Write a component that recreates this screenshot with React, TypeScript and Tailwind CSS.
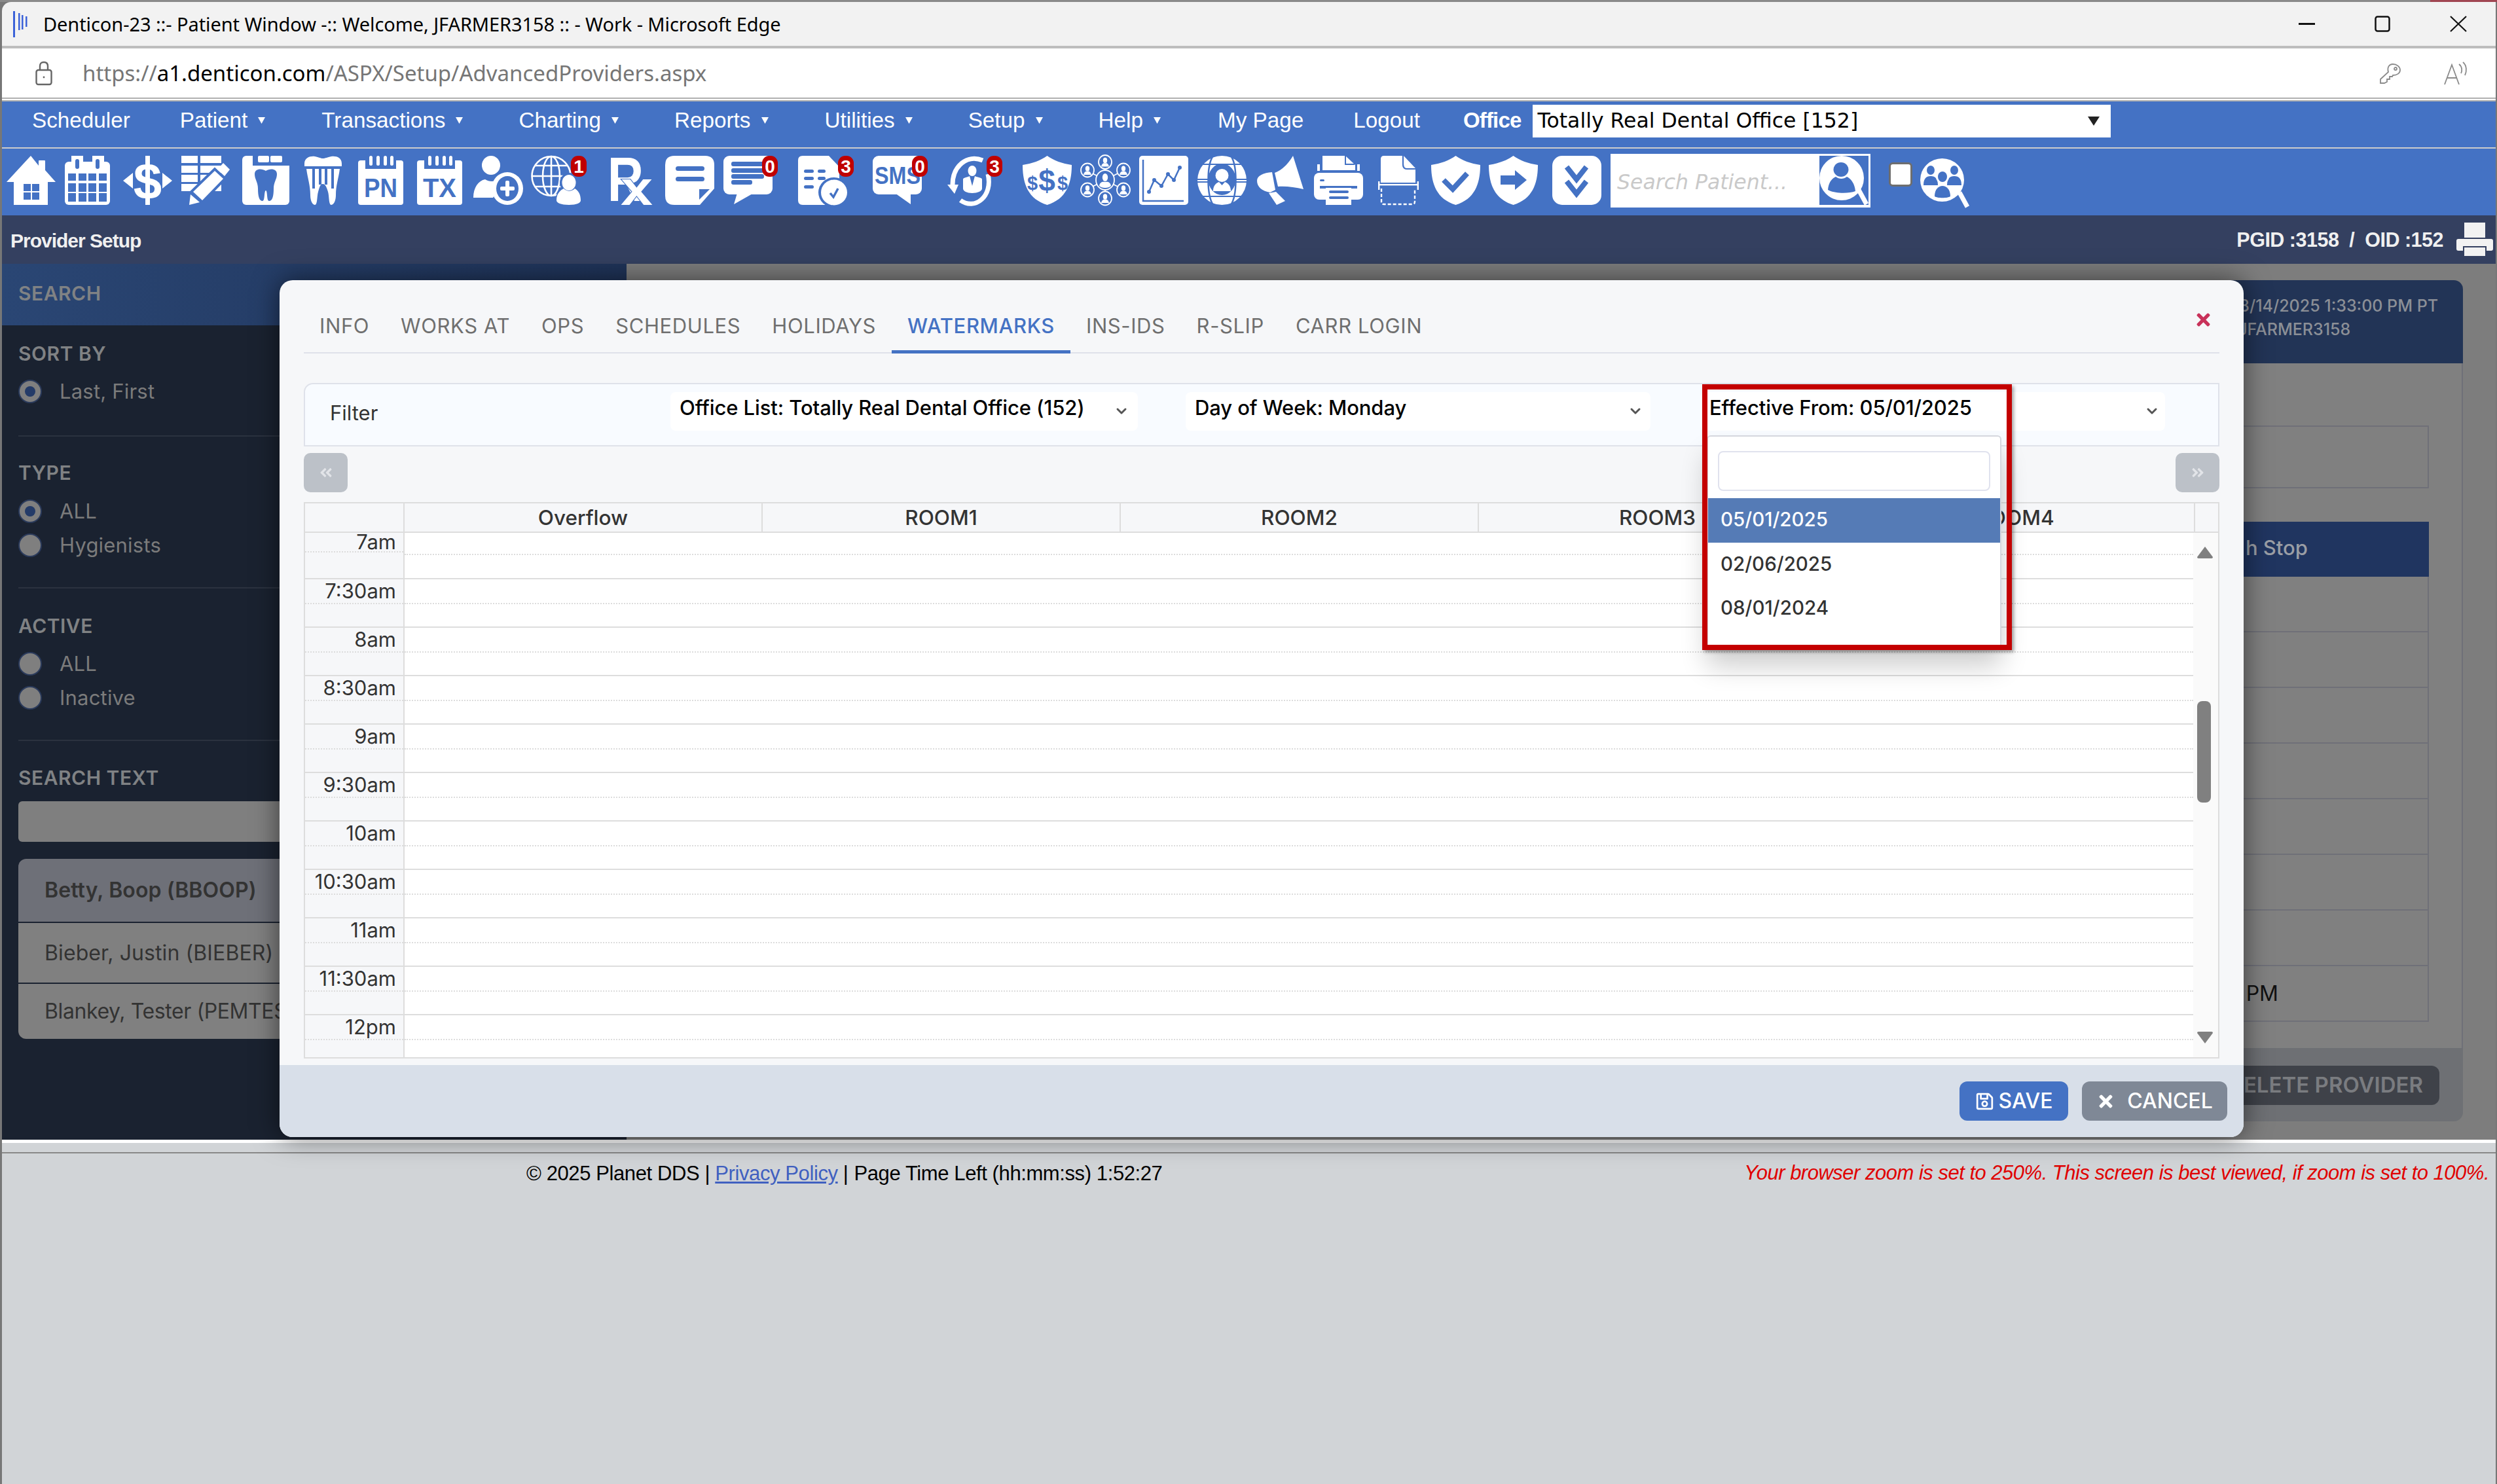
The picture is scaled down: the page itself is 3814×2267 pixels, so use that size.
import type { ReactNode } from "react"
import { FaTimes, FaRegSave, FaAngleDoubleLeft, FaAngleDoubleRight } from "react-icons/fa"
import { ChevronDown } from "lucide-react"

const W = "#ffffff"
const B = "#4472c4"

function Icon({ w, className, children }: { w: number; className?: string; children: ReactNode }) {
  return (
    <svg
      width={w}
      height={75}
      viewBox={`0 0 ${w} 75`}
      className={`shrink-0 overflow-visible font-['Liberation_Sans',sans-serif] font-bold ${className ?? ""}`}
    >
      {children}
    </svg>
  )
}

function Badge({ x, n }: { x: number; n: string }) {
  return (
    <g>
      <rect x={x} y={0} width={24} height={32} rx={11} fill="#c00000" />
      <text x={x + 12} y={25.5} textAnchor="middle" fontSize={28} fill={W}>
        {n}
      </text>
    </g>
  )
}

const SHIELD = "M37.5 0C28 7 14 12 0 14C0 42 8 66 37.5 75C67 66 75 42 75 14C61 12 47 7 37.5 0Z"

function Mini({ x, y }: { x: number; y: number }) {
  return (
    <g>
      <ellipse cx={x} cy={y} rx={10} ry={10.5} fill={B} stroke={W} strokeWidth={1.8} />
      <ellipse cx={x} cy={y - 2.5} rx={3.2} ry={4.2} fill={W} />
      <path d={`M${x - 6} ${y + 7}C${x - 5} ${y + 2} ${x - 2} ${y + 1} ${x} ${y + 2}C${x + 2} ${y + 1} ${x + 5} ${y + 2} ${x + 6} ${y + 7}Z`} fill={W} />
    </g>
  )
}

function DocTop({ label }: { label: string }) {
  return (
    <>
      <rect x={0} y={7} width={69} height={68} rx={4} fill={W} />
      <rect x={11} y={-1} width={47} height={21} fill={B} />
      {[17, 28, 39, 49].map((x) => (
        <rect key={x} x={x} y={0} width={5} height={15} rx={2.5} fill={W} />
      ))}
      <text x={9} y={63} fontSize={40} textLength={51} lengthAdjust="spacingAndGlyphs" fill={B}>
        {label}
      </text>
    </>
  )
}

function Toolbar() {
  return (
    <div className="flex h-[102px] items-start bg-[#4472c4] pt-[11px]">
      {/* house */}
      <Icon w={75} className="ml-[7px]">
        <path d="M37 0L49 15V8Q49 7 50 7H58Q59 7 59 8V22L75 40H63V75H11V40H0Z" fill={W} />
        {[26, 39].map((x) => [43, 56].map((y) => <rect key={`${x}${y}`} x={x} y={y} width={11} height={11} fill={B} />))}
      </Icon>
      {/* calendar */}
      <Icon w={69} className="ml-[14px]">
        <rect x={0} y={9} width={69} height={66} rx={6} fill={W} />
        <rect x={10} y={0} width={18} height={12} fill={W} />
        <rect x={42} y={0} width={18} height={12} fill={W} />
        <rect x={16} y={5} width={6} height={15} rx={3} fill={B} />
        <rect x={47} y={5} width={6} height={15} rx={3} fill={B} />
        {[5, 21, 36, 52].map((x) =>
          [27, 42, 57].map((y) => <rect key={`${x}${y}`} x={x} y={y} width={12} height={y === 27 ? 11 : 13} fill={B} />),
        )}
      </Icon>
      {/* dollar */}
      <Icon w={75} className="ml-[20px]">
        <rect x={34} y={0} width={7} height={75} fill={W} />
        <text x={37.5} y={66} textAnchor="middle" fontSize={78} fill={W}>
          $
        </text>
        <path d="M0 38L15 26V50ZM75 38L60 26V50Z" fill={W} />
      </Icon>
      {/* grid + pencil */}
      <Icon w={75} className="ml-[14px]">
        {[
          [0, 11],
          [15, 11],
          [29, 11],
          [43, 11],
        ].map(([y, h]) => (
          <g key={y}>
            <rect x={0} y={y} width={25} height={h} fill={W} />
            <rect x={29} y={y} width={32} height={h} fill={W} />
          </g>
        ))}
        <path d="M18 55L51 23L64 35L32 68Z" fill={B} stroke={B} strokeWidth={8} />
        <path d="M18 55L51 23L64 35L32 68Z" fill={W} />
        <path d="M14 59L28 71L12 75Z" fill={W} />
        <path d="M55 21L64 11L74 21L66 31Z" fill={W} />
      </Icon>
      {/* x-ray card */}
      <Icon w={72} className="ml-[18px]">
        <rect x={0} y={0} width={72} height={75} rx={6} fill={W} />
        <rect x={16} y={-1} width={57} height={16} fill={B} />
        <rect x={24} y={0} width={17} height={10} rx={2} fill={W} />
        <rect x={43} y={0} width={18} height={10} rx={2} fill={W} />
        <path d="M19 28C19 19 30 19 36 23C42 19 53 19 53 28C53 36 48 40 48 50C48 62 46 69 41 69C37 69 39 54 36 53C33 54 35 69 31 69C26 69 24 62 24 50C24 40 19 36 19 28Z" fill={B} />
      </Icon>
      {/* tooth */}
      <Icon w={57} className="ml-[23px]">
        <path d="M0 12C0 2 10 0 16 1C22 2 25 4 28 4C32 4 35 2 41 1C48 0 57 2 57 12V16H0Z" fill={W} />
        <path d="M3 20H54C52 35 48 45 48 60C48 70 44 75 41 75C37 75 38 62 36 55C34 48 32 43 28 43C24 43 23 48 21 55C19 62 20 75 16 75C13 75 9 70 9 60C9 45 5 35 3 20Z" fill={W} />
        {[12, 22, 31, 41].map((x) => (
          <rect key={x} x={x} y={20} width={4} height={x === 12 || x === 41 ? 30 : 24} fill={B} />
        ))}
      </Icon>
      <Icon w={69} className="ml-[25px]">
        <DocTop label="PN" />
      </Icon>
      <Icon w={68} className="ml-[21px]">
        <DocTop label="TX" />
      </Icon>
      {/* person plus */}
      <Icon w={76} className="ml-[18px]">
        <ellipse cx={27} cy={14.5} rx={14} ry={14.5} fill={W} />
        <path d="M0 64C0 48 8 38 18 36C24 40 32 40 38 36L46 40L30 64Z" fill={W} />
        <ellipse cx={52} cy={50} rx={24} ry={25} fill={W} />
        <ellipse cx={52} cy={50} rx={17} ry={19} fill={B} />
        <rect x={49} y={38} width={6} height={24} rx={2} fill={W} />
        <rect x={41} y={47} width={22} height={6} rx={2} fill={W} />
      </Icon>
      {/* globe with person */}
      <Icon w={86} className="ml-[12px]">
        <g fill="none" stroke={W} strokeWidth={2.6}>
          <ellipse cx={31} cy={31} rx={29.5} ry={30} />
          <ellipse cx={31} cy={31} rx={13} ry={30} />
          <path d="M31 1V61M2 31H60M7 15H55M7 47H55" />
        </g>
        <ellipse cx={58} cy={41} rx={14} ry={15} fill={B} />
        <path d="M37 78C34 60 44 48 58 48C72 48 80 60 77 78Z" fill={B} />
        <ellipse cx={58} cy={41} rx={10.5} ry={12} fill={W} />
        <path d="M39 68C39 57 46 52 50 50C55 55 62 55 67 50C72 53 76 58 76 68C76 72 70 75 58 75C46 75 39 72 39 68Z" fill={W} />
        <Badge x={61} n="1" />
      </Icon>
      {/* Rx */}
      <Icon w={69} className="ml-[31px]">
        <text x={0} y={69} fontSize={96} textLength={55} lengthAdjust="spacingAndGlyphs" fill={W}>
          R
        </text>
        <text x={20} y={75} fontSize={74} textLength={49} lengthAdjust="spacingAndGlyphs" fill={W} stroke={B} strokeWidth={2} paintOrder="stroke">
          x
        </text>
      </Icon>
      {/* note */}
      <Icon w={75} className="ml-[19px]">
        <path d="M14 0H61Q75 0 75 14V50L53 75H14Q0 75 0 61V14Q0 0 14 0Z" fill={W} />
        <path d="M52 51H68L52 67Z" fill={B} />
        <rect x={16} y={16} width={44} height={7} rx={3.5} fill={B} />
        <rect x={16} y={32} width={44} height={7} rx={3.5} fill={B} />
      </Icon>
      {/* chat */}
      <Icon w={83} className="ml-[14px]">
        <rect x={0} y={0} width={75} height={59} rx={9} fill={W} />
        <path d="M21 57L16 74L46 57Z" fill={W} />
        <rect x={12} y={9} width={50} height={7} rx={3} fill={B} />
        <rect x={12} y={19} width={50} height={7} rx={3} fill={B} />
        <rect x={12} y={28} width={50} height={7} rx={3} fill={B} />
        <rect x={12} y={37} width={32} height={7} rx={3} fill={B} />
        <Badge x={59} n="0" />
      </Icon>
      {/* document check */}
      <Icon w={85} className="ml-[31px]">
        <path d="M7 0H47L63 17V68Q63 75 56 75H7Q0 75 0 68V7Q0 0 7 0Z" fill={W} />
        {[21, 32].map((y) => (
          <g key={y}>
            <rect x={9} y={y} width={15} height={5} rx={2.5} fill={B} />
            <rect x={30} y={y} width={12} height={5} rx={2.5} fill={B} />
          </g>
        ))}
        <rect x={9} y={45} width={15} height={5} rx={2.5} fill={B} />
        <ellipse cx={55} cy={56} rx={24} ry={23} fill={B} />
        <ellipse cx={55} cy={56} rx={20} ry={19.5} fill={W} />
        <path d="M49 57L54 63L61 50" fill="none" stroke={B} strokeWidth={3.5} />
        <Badge x={61} n="3" />
      </Icon>
      {/* sms */}
      <Icon w={84} className="ml-[29px]">
        <rect x={0} y={0} width={75} height={59} rx={9} fill={W} />
        <path d="M34 57L58 74V57Z" fill={W} />
        <text x={3} y={43} fontSize={36} textLength={70} lengthAdjust="spacingAndGlyphs" fill={B}>
          SMS
        </text>
        <Badge x={60} n="0" />
      </Icon>
      {/* sync person */}
      <Icon w={85} className="ml-[30px]">
        <g fill="none" stroke={W} strokeWidth={7}>
          <path d="M54 7C30 -3 8 16 8 44" />
          <path d="M20 68C42 84 70 62 62 28" />
        </g>
        <path d="M0 44H17L11 58Z" fill={W} />
        <ellipse cx={38} cy={23} rx={6.5} ry={8} fill={W} />
        <path d="M24 36C24 33 30 33 34 31L38 46L42 31C46 33 53 33 53 36V50C53 54 46 57 38 57C30 57 24 54 24 50Z" fill={W} />
        <Badge x={60} n="3" />
      </Icon>
      {/* shield money */}
      <Icon w={75} className="ml-[30px]">
        <path d={SHIELD} fill={W} />
        <text x={15} y={52} textAnchor="middle" fontSize={29} fill={B}>
          $
        </text>
        <text x={37} y={54} textAnchor="middle" fontSize={46} fill={B}>
          $
        </text>
        <text x={61} y={52} textAnchor="middle" fontSize={29} fill={B}>
          $
        </text>
      </Icon>
      {/* network */}
      <Icon w={75} className="ml-[14px]">
        <path d="M37 19V56M14 25L60 49M60 25L14 49" stroke={W} strokeWidth={1.8} />
        <ellipse cx={37} cy={37} rx={14} ry={15} fill={B} stroke={W} strokeWidth={1.8} />
        <ellipse cx={37} cy={33} rx={4.2} ry={6} fill={W} />
        <path d="M28 46C29 40 33 39 37 40C41 39 45 40 46 46C42 50 32 50 28 46Z" fill={W} />
        <Mini x={37} y={9.5} />
        <Mini x={10} y={22} />
        <Mini x={65} y={22} />
        <Mini x={10} y={52} />
        <Mini x={65} y={52} />
        <Mini x={37} y={65} />
      </Icon>
      {/* chart */}
      <Icon w={75} className="ml-[14px]">
        <rect x={0} y={0} width={75} height={75} rx={5} fill={W} />
        <path d="M6 6V69H68" fill="none" stroke={B} strokeWidth={2.5} />
        <path d="M15 55L23 37L34 46L44 28L53 37L62 18" fill="none" stroke={B} strokeWidth={2.5} />
        {[
          [15, 55],
          [23, 37],
          [34, 46],
          [44, 28],
          [53, 37],
          [62, 18],
        ].map(([x, y]) => (
          <circle key={x} cx={x} cy={y} r={3} fill={B} />
        ))}
      </Icon>
      {/* globe person */}
      <Icon w={75} className="ml-[14px]">
        <ellipse cx={37.5} cy={37.5} rx={37.5} ry={37.5} fill={W} />
        <path d="M0 13H75M0 36H18M57 36H75M0 40H18M57 40H75M0 62H75" stroke={B} strokeWidth={2} />
        <path d="M24 0C14 14 14 60 24 75M51 0C61 14 61 60 51 75" fill="none" stroke={B} strokeWidth={2.5} />
        <ellipse cx={37.5} cy={36} rx={21} ry={24} fill={B} />
        <ellipse cx={37.5} cy={30} rx={10} ry={10} fill={W} />
        <path d="M24 54C24 44 30 41 33 40L37.5 45L42 40C45 41 51 44 51 54Z" fill={W} />
      </Icon>
      {/* megaphone */}
      <Icon w={71} className="ml-[16px]">
        <path d="M55 0L71 51C58 48 44 46 32 47L27 26C38 22 48 12 55 0Z" fill={W} />
        <path d="M23 25L28 52L20 56C8 54 0 48 0 38C0 30 10 26 23 25Z" fill={W} />
        <path d="M18 57L29 55L43 69L30 75Z" fill={W} />
      </Icon>
      {/* printer */}
      <Icon w={75} className="ml-[16px]">
        <path d="M13 0H48L63 14V22H13Z" fill={W} />
        <path d="M48 0V13H62" fill="none" stroke={B} strokeWidth={2} />
        <rect x={5} y={13} width={4} height={10} fill={W} />
        <rect x={66} y={13} width={4} height={10} fill={W} />
        <rect x={0} y={26} width={75} height={41} rx={8} fill={W} />
        <rect x={9} y={46} width={57} height={4} fill={B} />
        <rect x={9} y={36} width={7} height={3} rx={1.5} fill={B} />
        <rect x={18} y={49} width={39} height={26} fill={W} />
        <rect x={23} y={53} width={30} height={4} rx={2} fill={B} />
        <rect x={23} y={62} width={30} height={4} rx={2} fill={B} />
      </Icon>
      {/* scan document */}
      <Icon w={62} className="ml-[23px]">
        <path d="M9 0H39L57 19V41H4V5Q4 0 9 0Z" fill={W} />
        <path d="M38 0V13Q38 20 44 20H57" fill="none" stroke={B} strokeWidth={2.2} />
        <rect x={0} y={43} width={62} height={2.4} fill={W} />
        <rect x={0} y={39} width={2.4} height={13} fill={W} />
        <rect x={59.6} y={39} width={2.4} height={13} fill={W} />
        <path d="M5 50V70Q5 74 9 74H52Q56 74 56 70V50" fill="none" stroke={W} strokeWidth={2.4} strokeDasharray="5 3" />
      </Icon>
      {/* shield check */}
      <Icon w={75} className="ml-[19px]">
        <path d={SHIELD} fill={W} />
        <path d="M19 37L33 51L55 27" fill="none" stroke={B} strokeWidth={8} />
      </Icon>
      {/* shield arrow */}
      <Icon w={77} className="ml-[13px]">
        <path d={SHIELD} fill={W} />
        <path d="M18 30H40V22L58 37L40 52V44H18Z" fill={B} />
      </Icon>
      {/* double chevrons */}
      <Icon w={75} className="ml-[20px]">
        <rect x={0} y={0} width={75} height={75} rx={15} fill={W} />
        <path d="M22 17L37 36L52 17M22 39L37 58L52 39" fill="none" stroke={B} strokeWidth={8} />
      </Icon>
      {/* patient search */}
      <div className="ml-[14px] -mt-[3px] flex h-[82px] w-[397px] items-start bg-white">
        <span className="mt-[25px] ml-[10px] flex-1 font-['DejaVu_Sans',sans-serif] text-[31.5px] leading-[36px] italic text-[#c9c9c9]">
          Search Patient...
        </span>
        <Icon w={75} className="mt-[3px] mr-[3px]">
          <rect x={0} y={0} width={75} height={75} fill={B} />
          <ellipse cx={34} cy={34} rx={34} ry={34} fill={W} />
          <path d="M60 52L72 74" stroke={W} strokeWidth={7} />
          <ellipse cx={33} cy={21} rx={11.5} ry={11} fill={B} />
          <path d="M13 52C14 40 20 34 25 32C30 36 37 36 42 32C48 35 54 42 55 54C45 58 23 58 13 52Z" fill={B} />
        </Icon>
      </div>
      <input type="checkbox" className="mt-[10px] ml-[28px] h-[37px] w-[36px] appearance-none rounded-[6px] border-[3px] border-[#6e6e6e] bg-white" />
      {/* group search */}
      <Icon w={77} className="mt-[4px] ml-[12px]">
        <ellipse cx={33.5} cy={33} rx={33.5} ry={33} fill={W} />
        <path d="M60 52L72 74" stroke={W} strokeWidth={7} />
        {[
          [16, 24],
          [52, 24],
        ].map(([x, y]) => (
          <g key={x}>
            <ellipse cx={x} cy={y - 6} rx={6} ry={7} fill={B} />
            <path d={`M${x - 11} ${y + 17}C${x - 11} ${y + 7} ${x - 7} ${y + 3} ${x} ${y + 3}C${x + 7} ${y + 3} ${x + 11} ${y + 7} ${x + 11} ${y + 17}Z`} fill={B} />
          </g>
        ))}
        <ellipse cx={34} cy={28} rx={10} ry={11} fill={W} />
        <ellipse cx={34} cy={28} rx={7} ry={8} fill={B} />
        <path d="M19 60C19 46 26 40 34 40C42 40 49 46 49 60C44 64 24 64 19 60Z" fill={W} />
        <path d="M22 58C22 47 28 42 34 42C40 42 46 47 46 58C42 61 26 61 22 58Z" fill={B} />
      </Icon>
    </div>
  )
}

function Caret() {
  return (
    <svg width={13} height={12} viewBox="0 0 13 12" className="ml-[15px]">
      <path d="M1 1H12L6.5 11Z" fill={W} />
    </svg>
  )
}

function NavBar() {
  return (
    <div className="flex h-[70px] items-center bg-[#4472c4] pb-[12px] pl-[46px] font-['Liberation_Sans',sans-serif] text-[33.25px] text-white">
      <span>Scheduler</span>
      <span className="ml-[76px] flex items-center">
        Patient
        <Caret />
      </span>
      <span className="ml-[85px] flex items-center">
        Transactions
        <Caret />
      </span>
      <span className="ml-[84px] flex items-center">
        Charting
        <Caret />
      </span>
      <span className="ml-[84px] flex items-center">
        Reports
        <Caret />
      </span>
      <span className="ml-[85px] flex items-center">
        Utilities
        <Caret />
      </span>
      <span className="ml-[84px] flex items-center">
        Setup
        <Caret />
      </span>
      <span className="ml-[84px] flex items-center">
        Help
        <Caret />
      </span>
      <span className="ml-[86px]">My Page</span>
      <span className="ml-[76px]">Logout</span>
      <span className="ml-[66px] text-[33px] font-bold tracking-[-0.8px]">Office</span>
      <div className="-mb-[2px] ml-[17px] flex h-[50px] w-[883px] items-center justify-between bg-white pr-[16px] pl-[8px] font-['DejaVu_Sans',sans-serif] text-[31.5px] text-black">
        <span>Totally Real Dental Office [152]</span>
        <svg width={20} height={16} viewBox="0 0 20 16">
          <path d="M1 1H19L10 15Z" fill="#222222" />
        </svg>
      </div>
    </div>
  )
}

function Radio({ label, checked }: { label: string; checked?: boolean }) {
  return (
    <div className="flex h-[52px] items-center gap-[27px] text-[31px] tracking-[0.2px] text-[#7b7b7b]">
      <span className="flex h-[36px] w-[36px] items-center justify-center rounded-full border-2 border-[#2b3b5c] bg-[#7f7f7f]">
        {checked && <span className="h-[16px] w-[16px] rounded-full bg-[#243b68]" />}
      </span>
      {label}
    </div>
  )
}

function LeftPanel() {
  const title = "h-[36px] text-[30px] leading-[36px] font-semibold tracking-[0.5px] text-[#808284]"
  return (
    <div className="flex w-[954px] shrink-0 flex-col bg-[#1a2230] font-['Inter',sans-serif]">
      <div className={`flex h-[94px] items-center bg-linear-to-r from-[#2a4674] to-[#1f3358] pb-[4px] pl-[25px] ${title}`}>SEARCH</div>
      <div className="mx-[25px]">
        <div className="border-b-2 border-[#2b323f] pt-[25px] pb-[41px]">
          <div className={title}>SORT BY</div>
          <div className="mt-[14px]">
            <Radio label="Last, First" checked />
          </div>
        </div>
        <div className="border-b-2 border-[#2b323f] pt-[37px] pb-[38px]">
          <div className={title}>TYPE</div>
          <div className="mt-[15px]">
            <Radio label="ALL" checked />
            <Radio label="Hygienists" />
          </div>
        </div>
        <div className="border-b-2 border-[#2b323f] pt-[39px] pb-[38px]">
          <div className={title}>ACTIVE</div>
          <div className="mt-[14px]">
            <Radio label="ALL" />
            <Radio label="Inactive" />
          </div>
        </div>
        <div className="pt-[38px]">
          <div className={title}>SEARCH TEXT</div>
          <div className="mt-[18px] h-[62px] rounded-[6px] bg-[#7f7f7f]" />
          <div className="mt-[26px] flex flex-col gap-[2px] overflow-hidden rounded-[12px] text-[32px] tracking-[0.1px] text-[#333333]">
            <div className="flex h-[96px] items-center bg-[#6e7078] pl-[40px] font-semibold">Betty, Boop (BBOOP)</div>
            <div className="flex h-[91px] items-center bg-[#808080] pl-[40px]">Bieber, Justin (BIEBER)</div>
            <div className="flex h-[84px] items-center bg-[#808080] pl-[40px] tracking-[-0.4px]">Blankey, Tester (PEMTEST)</div>
          </div>
        </div>
      </div>
    </div>
  )
}

function RightBehind() {
  const rows = [0, 1, 2, 3, 4, 5, 6, 7]
  return (
    <div className="flex flex-1 flex-col bg-[#7d7d7d] pt-[25px] pr-[50px] font-['Inter',sans-serif]">
      <div className="flex h-[127px] justify-end rounded-t-[14px] bg-[#223456] pt-[21px] pr-[38px] text-[25px] leading-[36px] font-medium text-[#8b8f96]">
        <div>
          <div>03/14/2025 1:33:00 PM PT</div>
          <div className="pl-[14px]">JFARMER3158</div>
        </div>
      </div>
      <div className="flex h-[1046px] flex-col border-r-2 border-[#6f7078] bg-[#808080] pt-[95px] pr-[50px]">
        <div className="h-[96px] border-y-2 border-r-2 border-[#6f7078]" />
        <div className="mt-[51px] flex h-[84px] items-center justify-end bg-[#203560] pr-[185px] pb-[4px] text-[31px] font-medium text-[#9a9ea5]">
          h Stop
        </div>
        {rows.map((r) => (
          <div
            key={r}
            className={
              r === 7
                ? "flex h-[85px] items-center justify-end border-r-2 border-b-2 border-[#6f7078] pr-[228px] text-[32px] text-[#111111]"
                : "flex h-[85px] items-center border-r-2 border-b-2 border-[#6f7078]"
            }
          >
            {r === 7 ? "PM" : ""}
          </div>
        ))}
      </div>
      <div className="flex h-[112px] items-start justify-end rounded-b-[14px] bg-[#6e7074] pt-[27px] pr-[36px]">
        <div className="flex h-[60px] w-[500px] items-center justify-end rounded-[12px] bg-[#3f4249] pr-[25px] text-[33px] font-semibold text-[#7a7c80]">
          DELETE PROVIDER
        </div>
      </div>
    </div>
  )
}

function Select({ label, className }: { label: string; className: string }) {
  return (
    <div className={`mt-[12px] flex h-[59px] items-start justify-between rounded-[8px] bg-white pt-[8px] pl-[14px] ${className}`}>
      <span className="text-[31px] leading-[32px] font-medium tracking-[-0.1px] text-black">{label}</span>
      <ChevronDown size={24} strokeWidth={3} className="mt-[9px] text-[#555555]" />
    </div>
  )
}

const TIMES = ["7am", "7:30am", "8am", "8:30am", "9am", "9:30am", "10am", "10:30am", "11am", "11:30am", "12pm"]

function Row({ time, i }: { time: string; i: number }) {
  const first = i === 0
  const last = i === TIMES.length - 1
  const half = first ? "h-[34px] border-b-2 border-dotted border-[#dcdcdc]" : "h-[38px] border-b-2 border-dotted border-[#dcdcdc]"
  return (
    <div className={`flex shrink-0 ${first ? "h-[71px]" : "h-[74px]"} ${last ? "" : "border-b-2 border-[#dddddd]"}`}>
      <div className="w-[152px] shrink-0 border-r-2 border-[#dddddd] bg-[#f6f7f9]">
        <div className={`${half} flex justify-end pr-[11px] text-[31px] leading-[36px] text-[#333333] ${first ? "-mt-[4px]" : "pt-[0px]"}`}>{time}</div>
      </div>
      <div className="flex-1 bg-white">
        <div className={half} />
      </div>
    </div>
  )
}

function Modal() {
  const tabs = ["INFO", "WORKS AT", "OPS", "SCHEDULES", "HOLIDAYS", "WATERMARKS", "INS-IDS", "R-SLIP", "CARR LOGIN"]
  const rooms = ["Overflow", "ROOM1", "ROOM2", "ROOM3", "ROOM4"]
  return (
    <div className="absolute top-[25px] left-[424px] z-10 flex h-[1309px] w-[3000px] flex-col rounded-[20px] bg-[#f6f7f9] font-['Inter',sans-serif] shadow-[0_0_40px_rgba(0,0,0,0.55)]">
      <div className="flex-1 px-[37px]">
        <div className="relative flex h-[112px] items-end border-b-2 border-[#dfe1ea]">
          {tabs.map((t) => (
            <div
              key={t}
              className={
                t === "WATERMARKS"
                  ? "-mb-[2px] flex h-[79px] items-center border-b-[5px] border-[#4472c4] px-[24px] text-[31px] font-medium tracking-[0.6px] text-[#4472c4]"
                  : "-mb-[2px] flex h-[79px] items-center border-b-[5px] border-transparent px-[24px] text-[31px] tracking-[0.6px] text-[#6f6f6f]"
              }
            >
              {t}
            </div>
          ))}
          <FaTimes size={29} className="absolute top-[46px] right-[10px] text-[#c8325a]" />
        </div>
        <div className="mt-[45px] flex h-[97px] items-start rounded-tl-[14px] border-[2.5px] border-[#dfe2ea] bg-[#f8fbff]">
          <span className="mt-[25px] ml-[38px] w-[520px] shrink-0 text-[31px] leading-[38px] text-[#333333]">Filter</span>
          <Select label="Office List: Totally Real Dental Office (152)" className="w-[714px] pr-[13px]" />
          <Select label="Day of Week: Monday" className="ml-[73px] w-[710px] pr-[11px]" />
          <Select label="Effective From: 05/01/2025" className="ml-[76px] w-[710px] pr-[8px]" />
        </div>
        <div className="mt-[10px] flex h-[60px] justify-between">
          <div className="flex w-[67px] items-center justify-center rounded-[10px] bg-[#bcc1c8] text-[#e2e4e8]">
            <FaAngleDoubleLeft size={22} />
          </div>
          <div className="flex w-[67px] items-center justify-center rounded-[10px] bg-[#bcc1c8] text-[#e2e4e8]">
            <FaAngleDoubleRight size={22} />
          </div>
        </div>
        <div className="mt-[15px] flex h-[850px] flex-col overflow-hidden border-x-2 border-y-2 border-[#dddddd]">
          <div className="flex h-[45px] shrink-0 border-b-2 border-[#dddddd] bg-[#f6f7f9] text-[31.5px] font-medium text-[#333333]">
            <div className="w-[152px] shrink-0 border-r-2 border-[#dddddd]" />
            {rooms.map((r) => (
              <div key={r} className="flex w-[547px] shrink-0 items-center justify-center border-r-2 border-[#dddddd]">
                {r}
              </div>
            ))}
          </div>
          <div className="flex min-h-0 flex-1">
            <div className="flex min-w-0 flex-1 flex-col overflow-hidden">
              {TIMES.map((t, i) => (
                <Row key={t} time={t} i={i} />
              ))}
            </div>
            <div className="flex w-[38px] shrink-0 flex-col items-center bg-[#fafafa] pt-[21px] pr-[2px] pb-[21px]">
              <svg width={24} height={18} viewBox="0 0 24 18">
                <path d="M12 0L24 16Q24 18 22 18H2Q0 18 0 16Z" fill="#808080" />
              </svg>
              <div className="mt-[218px] -ml-[3px] h-[155px] w-[21px] rounded-[8px] bg-[#808080]" />
              <svg width={24} height={18} viewBox="0 0 24 18" className="mt-auto">
                <path d="M12 18L24 2Q24 0 22 0H2Q0 0 0 2Z" fill="#808080" />
              </svg>
            </div>
          </div>
        </div>
      </div>
      <div className="flex h-[110px] shrink-0 items-start justify-end gap-[21px] rounded-b-[20px] bg-[#d8dfe9] pt-[25px] pr-[25px] text-[32px] font-medium text-white">
        <div className="flex h-[60px] w-[166px] items-center justify-center gap-[7px] rounded-[12px] bg-[#4472c4]">
          <FaRegSave size={29} />
          SAVE
        </div>
        <div className="flex h-[60px] w-[222px] items-center justify-center gap-[18px] rounded-[12px] bg-[#7f8896]">
          <FaTimes size={29} />
          CANCEL
        </div>
      </div>

      {/* open date list */}
      <div className="absolute top-[237px] left-[2180px] z-20 h-[322px] w-[450px] rounded-t-[6px] border-2 border-[#d5d7de] bg-white pt-[22px] shadow-[0_30px_40px_rgba(0,0,0,0.2)]">
        <div className="mx-[15px] h-[61px] rounded-[8px] border-2 border-[#e0e2ee] bg-white" />
        <div className="mt-[11px] flex h-[68px] items-center bg-[#557bb6] pb-[3px] pl-[19px] text-[29.5px] font-medium text-white">05/01/2025</div>
        <div className="flex h-[67px] items-center pb-[3px] pl-[19px] text-[29.5px] font-medium text-[#333333]">02/06/2025</div>
        <div className="flex h-[67px] items-center pb-[3px] pl-[19px] text-[29.5px] font-medium text-[#333333]">08/01/2024</div>
      </div>
      {/* red annotation box */}
      <div className="absolute top-[159px] left-[2173px] z-30 h-[406px] w-[473px] border-[8px] border-[#c40000] shadow-[3px_3px_5px_rgba(0,0,0,0.35)]" />
    </div>
  )
}

export default function App() {
  return (
    <div className="relative flex h-[2267px] w-[3814px] flex-col overflow-hidden bg-[#777777] pr-[2px] pl-[3px]">
      <div className="-mr-[2px] -ml-[3px] flex h-[3px] shrink-0 justify-end bg-[#8a8a8a]">
        <div className="h-[3px] w-[102px] bg-[#a04652]" />
      </div>

      {/* window title */}
      <div className="flex h-[67px] shrink-0 items-center rounded-tl-[14px] bg-[#f2f2f2] pr-[44px] pl-[17px]">
        <svg width={28} height={40} viewBox="0 0 28 40" className="shrink-0">
          <rect x={0} y={0} width={3} height={40} fill="#3b62d8" />
          <rect x={8} y={3} width={2.5} height={26} fill="#3b62d8" />
          <rect x={13} y={6} width={2.5} height={22} fill="#3b62d8" />
          <rect x={19} y={8} width={2.5} height={16} fill="#3b62d8" />
        </svg>
        <span className="ml-[18px] font-['Noto_Sans',sans-serif] text-[29px] tracking-[-0.08px] text-black">
          Denticon-23 ::- Patient Window -:: Welcome, JFARMER3158 :: - Work - Microsoft Edge
        </span>
        <svg width={25} height={4} viewBox="0 0 25 4" className="ml-auto">
          <rect width={25} height={3} fill="#111111" />
        </svg>
        <svg width={24} height={25} viewBox="0 0 24 25" className="ml-[91px]">
          <rect x={1.5} y={1.5} width={21} height={22} rx={3} fill="none" stroke="#111111" strokeWidth={2.5} />
        </svg>
        <svg width={26} height={25} viewBox="0 0 26 25" className="ml-[91px]">
          <path d="M1 1L25 24M25 1L1 24" stroke="#111111" strokeWidth={2.2} />
        </svg>
      </div>
      <div className="h-[4px] shrink-0 bg-[#bdbdbd]" />

      {/* address bar */}
      <div className="flex h-[75px] shrink-0 items-center bg-white pr-[40px] pl-[51px]">
        <svg width={26} height={38} viewBox="0 0 26 38" className="shrink-0" fill="none" stroke="#666666" strokeWidth={2.4}>
          <path d="M7 14V8Q7 2 13 2Q19 2 19 8V14" />
          <rect x={1.5} y={14} width={23} height={22} rx={3} />
          <circle cx={13} cy={25} r={1.4} fill="#666666" stroke="none" />
        </svg>
        <span className="ml-[46px] font-['Noto_Sans',sans-serif] text-[33px] text-[#767676]">
          https://<span className="text-black">a1.denticon.com</span>/ASPX/Setup/AdvancedProviders.aspx
        </span>
        <svg width={34} height={32} viewBox="0 0 34 32" className="ml-auto" fill="none" stroke="#8a8a8a" strokeWidth={1.8}>
          <path d="M21 2C27 2 32 6 32 11C32 16 27 19 21 19L20 21H16V25H12V29L8 31H2V25L14 14C12 7 15 2 21 2Z" />
          <circle cx={25} cy={9} r={2} />
        </svg>
        <svg width={40} height={36} viewBox="0 0 40 36" className="ml-[64px]" fill="none" stroke="#8a8a8a" strokeWidth={1.8}>
          <path d="M2 35L13 5L24 35M6 25H20" />
          <path d="M24 4C29 8 29 14 27 18M30 1C36 6 36 15 33 21" />
        </svg>
      </div>
      <div className="flex h-[6px] shrink-0 flex-col justify-between bg-white">
        <div className="h-[2px] bg-[#b0b0b0]" />
        <div className="h-[2px] bg-[#b0b0b0]" />
      </div>

      <NavBar />
      <div className="h-[2px] shrink-0 bg-[#cccccc]" />
      <Toolbar />

      {/* page title */}
      <div className="flex h-[74px] shrink-0 items-center justify-between bg-[#344060] pt-[2px] pr-[4px] pl-[13px] font-['Liberation_Sans',sans-serif] text-[#f0f0f0]">
        <span className="pr-[2px] text-[30px] font-bold tracking-[-1px]">Provider Setup</span>
        <span className="flex items-center text-[30.5px] font-bold tracking-[-0.5px]">
          <span className="whitespace-pre">PGID :3158  /  OID :152</span>
          <svg width={56} height={52} viewBox="0 0 56 52" className="-mt-[2px] ml-[20px]">
            <rect x={12} y={0} width={32} height={23} fill="#f2f2f2" />
            <rect x={0} y={25} width={56} height={18} rx={3} fill="#f2f2f2" />
            <rect x={11} y={37} width={34} height={15} fill="#f2f2f2" stroke="#344060" strokeWidth={2} />
          </svg>
        </span>
      </div>

      {/* page behind the dialog */}
      <div className="relative flex h-[1338px] shrink-0">
        <LeftPanel />
        <RightBehind />
        <Modal />
      </div>

      {/* page footer */}
      <div className="h-[5px] shrink-0 bg-white" />
      <div className="h-[14px] shrink-0 bg-[#d1d4d7]" />
      <div className="h-[2px] shrink-0 bg-[#888888]" />
      <div className="flex flex-1 items-start justify-between bg-[#d1d4d7] pt-[13px] pr-[10px] pl-[801px] font-['Liberation_Sans',sans-serif]">
        <span className="text-[31px] leading-[36px] tracking-[-0.4px] text-black">
          © 2025 Planet DDS | <span className="text-[#4060c0] underline">Privacy Policy</span> |<span className="ml-[9px]">Page Time Left (hh:mm:ss) 1:52:27</span>
        </span>
        <span className="-mt-[1px] text-[31px] leading-[36px] tracking-[-0.5px] text-[#e00000] italic">
          Your browser zoom is set to 250%. This screen is best viewed, if zoom is set to 100%.
        </span>
      </div>
    </div>
  )
}
